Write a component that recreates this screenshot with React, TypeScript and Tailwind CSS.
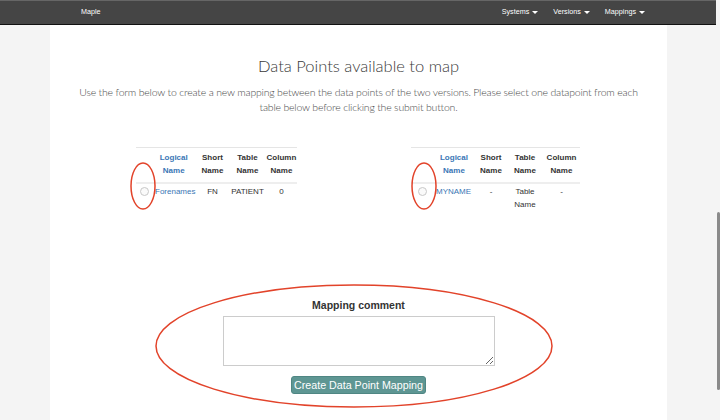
import React from "react";

function Caret() {
  return <span className="inline-block ml-[3px] align-middle w-0 h-0 border-l-[3px] border-r-[3px] border-t-[3px] border-l-transparent border-r-transparent border-t-white" />;
}

function Radio() {
  return <span className="inline-block w-[9px] h-[9px] rounded-full border border-[#c8c8c8] bg-[#fafafa]" />;
}

type Row = { logical: string; short: string; table: React.ReactNode; column: string };

function DataTable({ row, w }: { row: Row; w: number[] }) {
  return (
    <table className="border-collapse table-fixed text-[8px] leading-[13px] text-[#333]">
      <colgroup>
        {w.map((x, i) => (
          <col key={i} style={{ width: x }} />
        ))}
      </colgroup>
      <thead>
        <tr className="border-t border-[#e5e5e5] border-b-2 border-b-[#eeeeee]">
          <th></th>
          <th className="pt-[3px] pb-[5px] font-bold text-[#3a76b5] text-center">Logical<br />Name</th>
          <th className="pt-[3px] pb-[5px] font-bold text-center">Short<br />Name</th>
          <th className="pt-[3px] pb-[5px] font-bold text-center">Table<br />Name</th>
          <th className="pt-[3px] pb-[5px] font-bold text-center">Column<br />Name</th>
        </tr>
      </thead>
      <tbody>
        <tr>
          <td className="pt-[1px] align-top text-center"><span className="relative top-[2px]"><Radio /></span></td>
          <td className="pt-[1px] pl-[3px] align-top text-[#3a76b5] text-left">{row.logical}</td>
          <td className="pt-[1px] align-top text-center">{row.short}</td>
          <td className="pt-[1px] align-top text-center">{row.table}</td>
          <td className="pt-[1px] align-top text-center">{row.column}</td>
        </tr>
      </tbody>
    </table>
  );
}

export default function App() {
  return (
    <div className="relative w-[720px] h-[420px] overflow-hidden bg-[#f4f4f4] flex" style={{ fontFamily: '"Liberation Sans", Arial, sans-serif' }}>
      <div className="w-[716px] flex flex-col">
        <div className="h-[25px] bg-[#454545] border-b border-[#111] border-t border-t-[#666] flex items-center justify-between pl-[81px] pr-[71px] text-white text-[7.2px]">
          <span>Maple</span>
          <div className="flex gap-[15px]">
            <span>Systems<Caret /></span>
            <span>Versions<Caret /></span>
            <span>Mappings<Caret /></span>
          </div>
        </div>
        <div className="flex-1 flex">
          <div className="w-[50px]" />
          <div className="w-[617px] bg-white flex flex-col items-center">
            <h1 className="mt-[30px] text-[16.5px] leading-[22px] text-[#3a3a3a]" style={{ fontFamily: 'Lato, "Liberation Sans", sans-serif', fontWeight: 300 }}>Data Points available to map</h1>
            <p className="mt-[8px] w-[580px] text-center text-[10.5px] leading-[15px] tracking-[-0.2px] text-[#4a4a4a]" style={{ fontFamily: 'Lato, "Liberation Sans", sans-serif', fontWeight: 300 }}>
              Use the form below to create a new mapping between the data points of the two versions. Please select one datapoint from each table below before clicking the submit button.
            </p>
            <div className="mt-[32px] w-full flex justify-between pl-[86px] pr-[87px]">
              <DataTable w={[16, 42, 34, 36, 32]} row={{ logical: "Forenames", short: "FN", table: "PATIENT", column: "0" }} />
              <DataTable w={[22, 42, 32, 36, 37]} row={{ logical: "MYNAME", short: "-", table: <>Table<br />Name</>, column: "-" }} />
            </div>
            <div className="mt-[87px] flex flex-col items-center">
              <div className="text-[10.5px] font-bold text-[#333] leading-[14px]">Mapping comment</div>
              <textarea className="mt-[4px] w-[272px] h-[50px] border border-[#ccc] resize-y" />
              <button className="mt-[10px] h-[18px] px-[2px] rounded-[3px] bg-[#5e9693] text-white text-[10.7px] leading-[16px] border border-[#4f8683]">Create Data Point Mapping</button>
            </div>
          </div>
        </div>
      </div>
      <div className="w-[4px] bg-[#f4f4f4] relative">
        <div className="absolute left-[1px] top-[212px] w-[3px] h-[178px] rounded bg-[#8a8a8a]" />
      </div>
      <svg className="absolute inset-0 pointer-events-none" width="720" height="420">
        <ellipse cx="143" cy="186" rx="12" ry="23" fill="none" stroke="#e2432a" strokeWidth="1.5" />
        <ellipse cx="424" cy="186" rx="12" ry="23" fill="none" stroke="#e2432a" strokeWidth="1.5" />
        <ellipse cx="354" cy="346" rx="198" ry="61" fill="none" stroke="#e2432a" strokeWidth="1.5" />
      </svg>
    </div>
  );
}
